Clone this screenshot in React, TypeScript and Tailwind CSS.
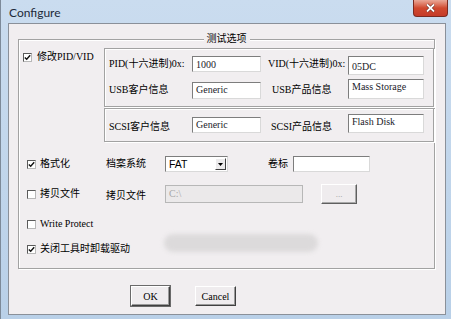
import React from 'react';

const font = "font-['Liberation_Serif','Noto_Sans_CJK_SC',serif]";

function Check({ checked }: { checked?: boolean }) {
  return (
    <span className="flex h-[9px] w-[9px] shrink-0 items-center justify-center border border-t-[#5a5a5a] border-l-[#5a5a5a] border-r-[#b8b8b8] border-b-[#b8b8b8] bg-white">
      {checked && (
        <svg width="7" height="7" viewBox="0 0 7 7">
          <path d="M0.8 3.4 L2.7 5.3 L6.2 1.2" fill="none" stroke="#111" strokeWidth="1.4" />
        </svg>
      )}
    </span>
  );
}

function Field({ text, w, h, className = '' }: { text?: string; w: string; h: string; className?: string }) {
  return (
    <div
      className={`${w} ${h} ${className} shrink-0 border border-t-[#7d7d7d] border-l-[#7d7d7d] border-r-[#d9d9d9] border-b-[#d9d9d9] bg-white px-[3px] text-[10px] leading-[13px] text-[#1b1b2a]`}
    >
      {text}
    </div>
  );
}

function Panel({ children, className = '' }: { children: React.ReactNode; className?: string }) {
  return (
    <div className={`border border-[#a2a2a2] shadow-[inset_1px_1px_0_#ffffff,1px_1px_0_#ffffff] ${className}`}>
      {children}
    </div>
  );
}

export default function App() {
  return (
    <div className={`${font} h-[319px] w-[451px] overflow-hidden border-l border-[#7d8a99] bg-gradient-to-b from-[#cadcef] to-[#b9d0e8] text-[10px] text-black`}>
      {/* title bar */}
      <div className="flex h-[23px] items-start">
        <div className="pl-[8px] pt-[5px] font-['Lato','Liberation_Sans',sans-serif] text-[12px] leading-[15px] text-[#1d2a3a]">
          Configure
        </div>
        <div className="ml-auto mr-[3px] flex h-[17px] w-[35px] items-center justify-center rounded-b-[4px] border border-t-0 border-[#7a2a20] bg-gradient-to-b from-[#e9a797] via-[#d0492f] to-[#c53b28]">
          <svg width="11" height="10" viewBox="0 0 11 10">
            <path d="M2 1.5 L9 8.5 M9 1.5 L2 8.5" stroke="#5a1d15" strokeWidth="3" />
            <path d="M2 1.5 L9 8.5 M9 1.5 L2 8.5" stroke="#ffffff" strokeWidth="1.8" />
          </svg>
        </div>
      </div>

      {/* client area */}
      <div className="ml-[7px] mr-[5px] h-[292px] border border-[#8a9099] bg-[#f1eef0]">
        <div className="relative ml-[9px] mr-[10px] mt-[15px] h-[230px] border border-[#a2a2a2] shadow-[inset_1px_1px_0_#ffffff,1px_1px_0_#ffffff]">
          <span className="absolute -top-[7px] left-1/2 -translate-x-1/2 bg-[#f1eef0] px-[3px] leading-[12px]">测试选项</span>

          <div className="flex">
            <div className="flex w-[85px] shrink-0 items-center gap-[5px] self-start pl-[4px] pt-[11px] leading-[12px]">
              <Check checked />
              <span>修改PID/VID</span>
            </div>
            <div className="mt-[8px] flex flex-1 flex-col gap-[1px]">
              <Panel className="px-[4px] pb-[7px] pt-[7px]">
                <div className="flex items-start leading-[12px]">
                  <span className="w-[83px] shrink-0 pt-[2px]">PID(十六进制)0x:</span>
                  <Field text="1000" w="w-[69px]" h="h-[16px]" className="pt-[1px]" />
                  <span className="ml-[7px] w-[80px] shrink-0 pt-[2px]">VID(十六进制)0x:</span>
                  <Field text="05DC" w="w-[76px]" h="h-[19px]" className="pt-[3px]" />
                </div>
                <div className="mt-[4px] flex items-start leading-[12px]">
                  <span className="w-[83px] shrink-0 pt-[5px]">USB客户信息</span>
                  <Field text="Generic" w="w-[69px]" h="h-[17px]" className="mt-[3px]" />
                  <span className="ml-[11px] w-[76px] shrink-0 pt-[5px]">USB产品信息</span>
                  <Field text="Mass Storage" w="w-[76px]" h="h-[20px]" />
                </div>
              </Panel>
              <Panel className="px-[4px] pb-[8px] pt-[5px]">
                <div className="flex items-start leading-[12px]">
                  <span className="w-[83px] shrink-0 pt-[7px]">SCSI客户信息</span>
                  <Field text="Generic" w="w-[69px]" h="h-[16px]" className="mt-[3px]" />
                  <span className="ml-[10px] w-[77px] shrink-0 pt-[7px]">SCSI产品信息</span>
                  <Field text="Flash Disk" w="w-[76px]" h="h-[19px]" />
                </div>
              </Panel>
            </div>
          </div>

          {/* format row */}
          <div className="mt-[14px] flex items-center leading-[12px]">
            <div className="flex w-[87px] shrink-0 items-center gap-[4px] pl-[8px]">
              <Check checked />
              <span>格式化</span>
            </div>
            <span className="w-[59px] shrink-0">档案系统</span>
            <div className="flex h-[16px] w-[63px] shrink-0 items-center border border-t-[#7d7d7d] border-l-[#7d7d7d] border-r-[#d9d9d9] border-b-[#d9d9d9] bg-white">
              <span className="flex-1 pl-[3px] font-['Liberation_Sans',sans-serif] text-[10.5px]">FAT</span>
              <span className="mr-[1px] flex h-[12px] w-[11px] items-center justify-center border border-t-[#ffffff] border-l-[#ffffff] border-r-[#404040] border-b-[#404040] bg-[#ecebec]">
                <svg width="5" height="3" viewBox="0 0 5 3">
                  <path d="M0 0 H5 L2.5 3 Z" fill="#000" />
                </svg>
              </span>
            </div>
            <span className="ml-[40px] w-[25px] shrink-0">卷标</span>
            <Field w="w-[77px]" h="h-[16px]" />
          </div>

          {/* copy row */}
          <div className="mt-[12px] flex items-center leading-[12px]">
            <div className="flex w-[87px] shrink-0 items-center gap-[4px] pl-[8px]">
              <Check />
              <span>拷贝文件</span>
            </div>
            <span className="w-[59px] shrink-0 pt-[4px]">拷贝文件</span>
            <div className="h-[18px] w-[138px] shrink-0 border border-[#b7b7b7] bg-[#ebe9ea] pl-[3px] pt-[2px] text-[#a8a8a8]">
              C:\
            </div>
            <div className="ml-[18px] flex h-[20px] w-[36px] items-center justify-center border border-t-[#ffffff] border-l-[#ffffff] border-r-[#5f5f5f] border-b-[#5f5f5f] bg-[#efecee] text-[9px] text-[#9a9a9a] shadow-[inset_-1px_-1px_0_#a9a9a9]">
              ...
            </div>
          </div>

          {/* write protect */}
          <div className="mt-[14px] flex items-center gap-[4px] pl-[8px] leading-[12px]">
            <Check />
            <span>Write Protect</span>
          </div>

          {/* unload driver */}
          <div className="mt-[13px] flex items-center gap-[4px] pl-[8px] leading-[12px]">
            <Check checked />
            <span>关闭工具时卸载驱动</span>
          </div>

          <div className="absolute left-[145px] top-[194px] h-[18px] w-[154px] rounded-full bg-[#dcdadb] blur-[2px]" />
        </div>

        {/* buttons */}
        <div className="ml-[122px] mt-[17px] flex gap-[25px]">
          <div className="flex h-[20px] w-[39px] items-center justify-center border border-t-[#ffffff] border-l-[#ffffff] border-r-[#404040] border-b-[#404040] bg-[#efecee] shadow-[inset_-1px_-1px_0_#9a9a9a,0_0_0_1px_#6a6a6a]">
            OK
          </div>
          <div className="flex h-[20px] w-[41px] items-center justify-center border border-t-[#ffffff] border-l-[#ffffff] border-r-[#404040] border-b-[#404040] bg-[#efecee] shadow-[inset_-1px_-1px_0_#9a9a9a]">
            Cancel
          </div>
        </div>
      </div>
    </div>
  );
}
